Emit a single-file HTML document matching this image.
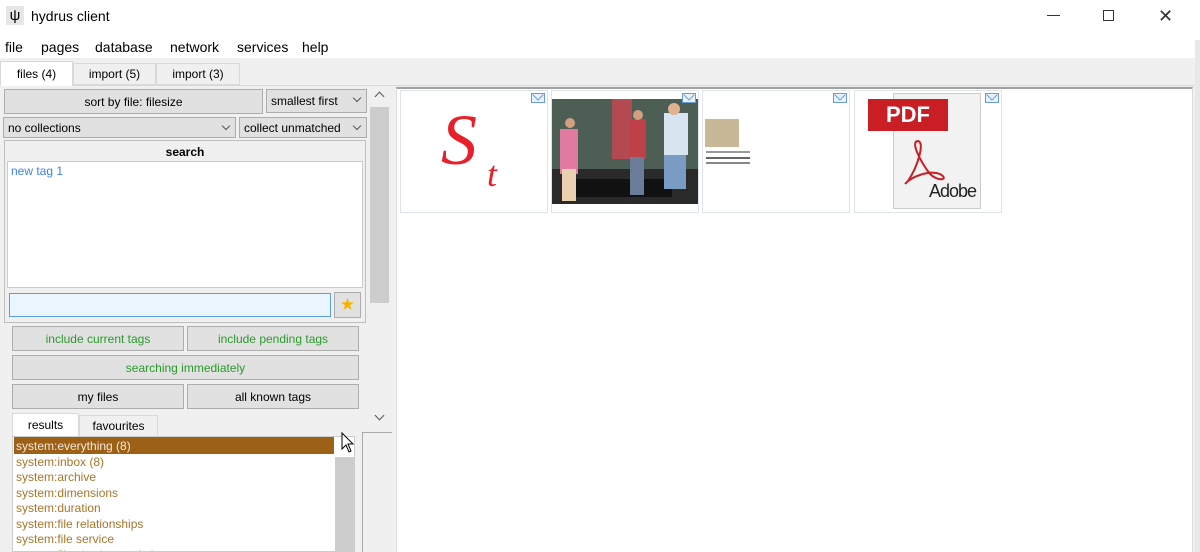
<!DOCTYPE html><html><head><style>
*{box-sizing:border-box;margin:0;padding:0}
html,body{width:1200px;height:552px;overflow:hidden}
body{background:#fff;font-family:"Liberation Sans",sans-serif;font-size:12px;color:#000;position:relative}
.a{position:absolute}
.btn{position:absolute;background:#e1e1e1;border:1px solid #adadad;display:flex;align-items:center;justify-content:center;font-size:12px}
.g{color:#2a9a2a}
.combo{position:absolute;background:#e1e1e1;border:1px solid #adadad;display:flex;align-items:center;padding-left:4px;font-size:12px}
.combo:after{content:"";position:absolute;right:6px;top:5px;width:5px;height:5px;border-right:1px solid #555;border-bottom:1px solid #555;transform:rotate(45deg)}
.th{position:absolute;top:90px;width:148px;height:123px;border:1px solid #dde4ec;background:#fff;overflow:hidden}
.env{position:absolute;right:2px;top:2px;width:14px;height:10px;border:1px solid #6b9bd6;background:#e8f1fc;overflow:hidden}
.env:after{content:"";position:absolute;left:2px;top:-3px;width:7px;height:7px;border-right:1px solid #6b9bd6;border-bottom:1px solid #6b9bd6;transform:rotate(45deg)}
.li{position:absolute;left:3px;font-size:12px;color:#a8752a;white-space:nowrap}
</style></head><body>
<div class="a" style="left:6px;top:6px;width:18px;height:19px;background:#e6e6e6;font-size:15px;text-align:center;line-height:19px">ψ</div>
<div class="a" style="left:31px;top:8px;font-size:14px">hydrus client</div>
<div class="a" style="left:1047px;top:15px;width:13px;height:1px;background:#333"></div>
<div class="a" style="left:1103px;top:10px;width:11px;height:11px;border:1px solid #333"></div>
<div class="a" style="left:1158px;top:8px;font-size:18px;line-height:16px;color:#333">✕</div>
<div class="a" style="left:5px;top:39px;font-size:14px">file</div>
<div class="a" style="left:41px;top:39px;font-size:14px">pages</div>
<div class="a" style="left:95px;top:39px;font-size:14px">database</div>
<div class="a" style="left:170px;top:39px;font-size:14px">network</div>
<div class="a" style="left:237px;top:39px;font-size:14px">services</div>
<div class="a" style="left:302px;top:39px;font-size:14px">help</div>
<div class="a" style="left:0;top:58px;width:1195px;height:494px;background:#f0f0f0"></div>
<div class="a" style="left:1195px;top:40px;width:5px;height:512px;background:#e8e8e8"></div>
<div class="a" style="left:0;top:85px;width:1195px;height:1px;background:#d9d9d9"></div>
<div class="a" style="left:0;top:61px;width:73px;height:25px;background:#fff;border:1px solid #d9d9d9;border-bottom:none;font-size:12px;text-align:center;line-height:24px">files (4)</div>
<div class="a" style="left:73px;top:63px;width:83px;height:22px;background:#f0f0f0;border:1px solid #d9d9d9;text-align:center;line-height:21px">import (5)</div>
<div class="a" style="left:156px;top:63px;width:84px;height:22px;background:#f0f0f0;border:1px solid #d9d9d9;text-align:center;line-height:21px">import (3)</div>
<div class="btn" style="left:4px;top:89px;width:259px;height:25px">sort by file: filesize</div>
<div class="combo" style="left:266px;top:89px;width:101px;height:24px">smallest first</div>
<div class="combo" style="left:3px;top:117px;width:233px;height:21px">no collections</div>
<div class="combo" style="left:239px;top:117px;width:128px;height:21px">collect unmatched</div>
<div class="a" style="left:4px;top:140px;width:362px;height:183px;border:1px solid #bfbfbf;background:#f0f0f0"></div>
<div class="a" style="left:4px;top:145px;width:362px;text-align:center;font-weight:bold;font-size:12px">search</div>
<div class="a" style="left:7px;top:161px;width:356px;height:127px;background:#fff;border:1px solid #ccc"></div>
<div class="a" style="left:11px;top:164px;color:#3b82e8">new tag 1</div>
<div class="a" style="left:9px;top:293px;width:322px;height:24px;background:#eaf5fd;border:1px solid #5a9ee2"></div>
<div class="btn" style="left:334px;top:292px;width:27px;height:26px;color:#f2b600;font-size:17px">★</div>
<div class="btn g" style="left:12px;top:326px;width:172px;height:25px">include current tags</div>
<div class="btn g" style="left:187px;top:326px;width:172px;height:25px">include pending tags</div>
<div class="btn g" style="left:12px;top:355px;width:347px;height:25px">searching immediately</div>
<div class="btn" style="left:12px;top:384px;width:172px;height:25px">my files</div>
<div class="btn" style="left:187px;top:384px;width:172px;height:25px">all known tags</div>
<div class="a" style="left:12px;top:413px;width:67px;height:24px;background:#fff;border:1px solid #d9d9d9;border-bottom:none;text-align:center;line-height:22px">results</div>
<div class="a" style="left:79px;top:415px;width:79px;height:22px;border:1px solid #d9d9d9;text-align:center;line-height:21px">favourites</div>
<div class="a" style="left:12px;top:436px;width:343px;height:116px;background:#fff;border:1px solid #ccc;overflow:hidden">
<div class="a" style="left:322px;top:20px;width:19px;height:100px;background:#cdcdcd"></div>
<div class="a" style="left:1px;top:0;width:320px;height:17px;background:#9c6116"></div>
<div class="li" style="top:2px;color:#f4e8d8">system:everything (8)</div>
<div class="li" style="top:18px">system:inbox (8)</div>
<div class="li" style="top:33px">system:archive</div>
<div class="li" style="top:49px">system:dimensions</div>
<div class="li" style="top:64px">system:duration</div>
<div class="li" style="top:80px">system:file relationships</div>
<div class="li" style="top:95px">system:file service</div>
<div class="li" style="top:111px">system:file viewing statistics</div>
</div>
<svg class="a" style="left:341px;top:432px" width="14" height="22"><path d="M1 1 L1 17 L5 13 L8 20 L10 19 L7 12 L12 12 Z" fill="#fff" stroke="#000"/></svg>
<div class="a" style="left:370px;top:88px;width:20px;height:341px;background:#f0f0f0"></div>
<div class="a" style="left:370px;top:107px;width:19px;height:196px;background:#cdcdcd"></div>
<div class="a" style="left:376px;top:93px;width:7px;height:7px;border-left:1px solid #555;border-top:1px solid #555;transform:rotate(45deg)"></div>
<div class="a" style="left:376px;top:412px;width:7px;height:7px;border-right:1px solid #555;border-bottom:1px solid #555;transform:rotate(45deg)"></div>
<div class="a" style="left:362px;top:432px;width:30px;height:1px;background:#aaa"></div>
<div class="a" style="left:362px;top:432px;width:1px;height:120px;background:#aaa"></div>
<div class="a" style="left:396px;top:87px;width:797px;height:465px;background:#fff;border-top:2px solid #a0a0a0;border-left:1px solid #ddd;border-right:1px solid #ddd"></div>
<div class="th" style="left:400px"><div class="a" style="left:40px;top:8px;font-family:'Liberation Serif',serif;font-style:italic;font-size:72px;color:#e8202a">S</div><div class="a" style="left:86px;top:62px;font-family:'Liberation Serif',serif;font-style:italic;font-size:36px;color:#e8202a">t</div><div class="env"></div></div>
<div class="th" style="left:551px"><svg class="a" style="left:0;top:8px" width="147" height="105"><rect width="147" height="105" fill="#4d5e55"/><rect x="60" y="0" width="20" height="60" fill="#b34a52"/><rect x="0" y="70" width="147" height="35" fill="#2a2a2a"/><rect x="20" y="80" width="100" height="18" fill="#111"/><rect x="8" y="30" width="18" height="45" fill="#e07aa0"/><rect x="10" y="70" width="14" height="32" fill="#e8d0b0"/><rect x="78" y="20" width="16" height="40" fill="#c0404a"/><rect x="78" y="58" width="14" height="38" fill="#6a7c98"/><rect x="112" y="14" width="24" height="42" fill="#d8e4f0"/><rect x="112" y="56" width="22" height="34" fill="#7a9cc4"/><circle cx="122" cy="10" r="6" fill="#e0b090"/><circle cx="86" cy="16" r="5" fill="#d0a080"/><circle cx="18" cy="24" r="5" fill="#d0a080"/></svg><div class="env"></div></div>
<div class="th" style="left:702px"><div class="a" style="left:2px;top:28px;width:34px;height:28px;background:#c8b898"></div><div class="a" style="left:3px;top:60px;width:44px;height:2px;background:#999"></div><div class="a" style="left:3px;top:66px;width:44px;height:2px;background:#666"></div><div class="a" style="left:3px;top:71px;width:44px;height:2px;background:#888"></div><div class="env"></div></div>
<div class="th" style="left:854px"><div class="a" style="left:38px;top:2px;width:88px;height:116px;background:#f2f2f2;border:1px solid #ccc"></div><div class="a" style="left:13px;top:8px;width:80px;height:32px;background:#c81e24;color:#fff;font-weight:bold;font-size:22px;text-align:center;line-height:32px">PDF</div><div class="a" style="left:74px;top:90px;font-size:18px;color:#222;letter-spacing:-1px">Adobe</div><svg class="a" style="left:45px;top:45px" width="60" height="50"><path d="M18 5 C10 5 20 25 30 38 C38 46 50 44 40 38 C30 34 12 40 5 48 M18 5 C25 6 18 30 8 45" stroke="#c81e24" stroke-width="2" fill="none"/></svg><div class="env"></div></div>
</body></html>
